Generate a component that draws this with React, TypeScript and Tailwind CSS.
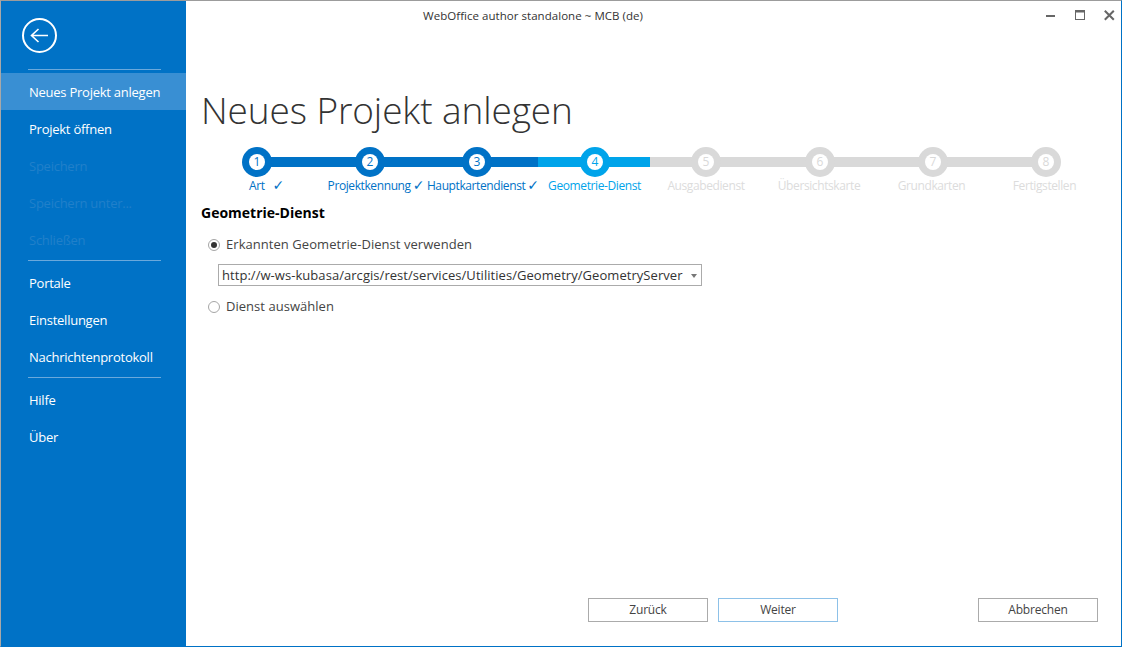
import React from "react";

const font = { fontFamily: '"Open Sans", "Noto Sans", sans-serif' };

function Sep() {
  return <div className="h-px w-[133px] ml-[27px] bg-[#6aa9dc]" />;
}

function NavItem({ label, active, disabled }: { label: string; active?: boolean; disabled?: boolean }) {
  return (
    <div
      className={
        "h-[37px] flex items-center pl-[28px] pt-[2px] text-[13px] tracking-[-0.25px] whitespace-nowrap " +
        (active ? "bg-[#398fd3] w-[185px] relative z-10 text-white " : disabled ? "text-[#2080ca] " : "text-white ")
      }
    >
      {label}
    </div>
  );
}

function Circle({ n, kind }: { n: number; kind: "done" | "cur" | "todo" }) {
  const ring = kind === "done" ? "bg-[#0072c6]" : kind === "cur" ? "bg-[#00a4ea]" : "bg-[#d9d9d9]";
  const txt = kind === "done" ? "text-[#0072c6]" : kind === "cur" ? "text-[#00a4ea]" : "text-[#d9d9d9]";
  return (
    <div className={"relative z-10 w-[30px] h-[30px] rounded-full shrink-0 flex items-center justify-center " + ring}>
      <div className={"w-[16px] h-[16px] rounded-full bg-white flex items-center justify-center text-[12px] font-normal leading-none " + txt}>
        {n}
      </div>
    </div>
  );
}

function Bar({ cls }: { cls: string }) {
  return <div className={"h-[10px] shrink-0 " + cls} />;
}

function Label({ w, text, check, cls }: { w: string; text: string; check?: string; cls: string }) {
  return (
    <div className={"text-center text-[12px] font-normal tracking-[-0.4px] whitespace-nowrap " + w + " " + cls}>
      {text}
      {check ? <span className={"font-['DejaVu_Sans'] text-[14px] font-normal leading-[14px] tracking-normal " + check}>✓</span> : null}
    </div>
  );
}

function Radio({ on }: { on?: boolean }) {
  return (
    <div className="w-[12px] h-[12px] rounded-full border border-[#a6a6a6] bg-white flex items-center justify-center shrink-0">
      {on ? <div className="w-[6px] h-[6px] rounded-full bg-[#333333]" /> : null}
    </div>
  );
}

function Btn({ label, blue, cls }: { label: string; blue?: boolean; cls?: string }) {
  return (
    <div
      className={
        "w-[120px] h-[24px] border flex items-center justify-center text-[12px] tracking-[-0.2px] text-[#444444] " +
        (blue ? "border-[#8dc1e8] " : "border-[#ababab] ") +
        (cls ?? "")
      }
    >
      {label}
    </div>
  );
}

export default function App() {
  return (
    <div
      style={font}
      className="w-[1122px] h-[647px] flex bg-white overflow-hidden border-t border-l border-t-[#9c9c9c] border-l-[#a8a8a8] border-r border-b border-r-[#0072c6] border-b-[#0072c6] box-border"
    >
      <aside className="w-[185px] shrink-0 bg-[#0072c6] flex flex-col">
        <div className="h-[68px] pl-[21px] pt-[17px] shrink-0">
          <svg width="36" height="36" viewBox="0 0 36 36" fill="none" stroke="white">
            <circle cx="17.5" cy="17.5" r="16.5" strokeWidth="2" />
            <path d="M9 17.5H26M16.5 11L9.5 17.5L16.5 24" strokeWidth="1.6" />
          </svg>
        </div>
        <Sep />
        <div className="h-[3px]" />
        <NavItem label="Neues Projekt anlegen" active />
        <NavItem label="Projekt öffnen" />
        <NavItem label="Speichern" disabled />
        <NavItem label="Speichern unter..." disabled />
        <NavItem label="Schließen" disabled />
        <div className="h-[2px]" />
        <Sep />
        <div className="h-[3px]" />
        <NavItem label="Portale" />
        <NavItem label="Einstellungen" />
        <NavItem label="Nachrichtenprotokoll" />
        <div className="h-[2px]" />
        <Sep />
        <div className="h-[3px]" />
        <NavItem label="Hilfe" />
        <NavItem label="Über" />
      </aside>

      <main className="flex-1 flex flex-col min-w-0">
        <header className="h-[30px] shrink-0 flex items-start">
          <div className="pl-[237px] pt-[6px] text-[11.5px] leading-[18px] tracking-[0.04px] text-[#333333] whitespace-nowrap w-[860px]">
            WebOffice author standalone ~ MCB (de)
          </div>
          <svg width="10" height="10" viewBox="0 0 10 10" className="mt-[9px]" fill="#666666">
            <rect x="0" y="5" width="9" height="2" />
          </svg>
          <svg width="11" height="11" viewBox="0 0 11 11" className="mt-[9px] ml-[19px]" fill="none" stroke="#666666">
            <rect x="0.5" y="0.5" width="9" height="9" />
            <rect x="0" y="0" width="10" height="2.5" fill="#666666" stroke="none" />
          </svg>
          <svg width="11" height="11" viewBox="0 0 11 11" className="mt-[9px] ml-[18px]" fill="none" stroke="#666666" strokeWidth="2">
            <path d="M0.8 0.8L9.8 9.8M9.8 0.8L0.8 9.8" />
          </svg>
        </header>

        <h1 className="h-[116px] shrink-0 pl-[15px] pt-[54px] text-[37px] font-light leading-[50px] tracking-[-0.1px] text-[#333333] whitespace-nowrap">
          Neues Projekt anlegen
        </h1>

        {/* stepper */}
        <div className="flex items-center pl-[56px] h-[30px] shrink-0">
          <Circle n={1} kind="done" />
          <Bar cls="w-[89px] -mx-[3px] bg-[#0072c6]" />
          <Circle n={2} kind="done" />
          <Bar cls="w-[83px] -mx-[3px] bg-[#0072c6]" />
          <Circle n={3} kind="done" />
          <Bar cls="w-[49px] -ml-[3px] bg-[#0072c6]" />
          <Bar cls="w-[45px] -mr-[3px] bg-[#00a4ea]" />
          <Circle n={4} kind="cur" />
          <Bar cls="w-[43px] -ml-[3px] bg-[#00a4ea]" />
          <Bar cls="w-[44px] -mr-[3px] bg-[#d9d9d9]" />
          <Circle n={5} kind="todo" />
          <Bar cls="w-[90px] -mx-[3px] bg-[#d9d9d9]" />
          <Circle n={6} kind="todo" />
          <Bar cls="w-[89px] -mx-[3px] bg-[#d9d9d9]" />
          <Circle n={7} kind="todo" />
          <Bar cls="w-[89px] -mx-[3px] bg-[#d9d9d9]" />
          <Circle n={8} kind="todo" />
        </div>
        <div className="flex pl-[63px] h-[17px] leading-[17px] shrink-0">
          <Label w="w-[35px] text-left" text="Art" check="ml-[8px]" cls="text-[#0072c6]" />
          <div className="w-[42px]" />
          <Label w="w-[100px]" text="Projektkennung" check="ml-[2px]" cls="text-[#0072c6]" />
          <Label w="w-[114px]" text="Hauptkartendienst" check="ml-[2px]" cls="text-[#0072c6]" />
          <Label w="w-[109px]" text="Geometrie-Dienst" cls="text-[#00a4ea]" />
          <Label w="w-[114px]" text="Ausgabedienst" cls="text-[#dcdcdc]" />
          <Label w="w-[112px]" text="Übersichtskarte" cls="text-[#dcdcdc]" />
          <Label w="w-[113px]" text="Grundkarten" cls="text-[#dcdcdc]" />
          <Label w="w-[113px]" text="Fertigstellen" cls="text-[#dcdcdc]" />
        </div>

        {/* form */}
        <div className="pl-[15px] pt-[9px] flex-1">
          <div className="text-[14px] font-bold tracking-[0px] text-black leading-[20px]">Geometrie-Dienst</div>
          <div className="flex items-center gap-[6px] pl-[7px] mt-[12px] h-[20px]">
            <Radio on />
            <span className="text-[13px] tracking-[0.05px] text-[#444444]">Erkannten Geometrie-Dienst verwenden</span>
          </div>
          <div className="ml-[17px] mt-[9px] w-[484px] h-[22px] border border-[#ababab] flex items-center pl-[3px] pr-[4px] pt-[2px] justify-between">
            <span className="text-[13px] tracking-[0.05px] text-[#333333] whitespace-nowrap">
              http://w-ws-kubasa/arcgis/rest/services/Utilities/Geometry/GeometryServer
            </span>
            <svg width="6" height="4" viewBox="0 0 6 4" fill="#777777">
              <path d="M0 0H6L3 4Z" />
            </svg>
          </div>
          <div className="flex items-center gap-[6px] pl-[7px] mt-[11px] h-[20px]">
            <Radio />
            <span className="text-[13px] tracking-[0.03px] text-[#444444]">Dienst auswählen</span>
          </div>
        </div>

        <footer className="flex pl-[402px] pb-[24px] shrink-0">
          <Btn label="Zurück" />
          <Btn label="Weiter" blue cls="ml-[10px]" />
          <Btn label="Abbrechen" cls="ml-[140px]" />
        </footer>
      </main>
    </div>
  );
}
